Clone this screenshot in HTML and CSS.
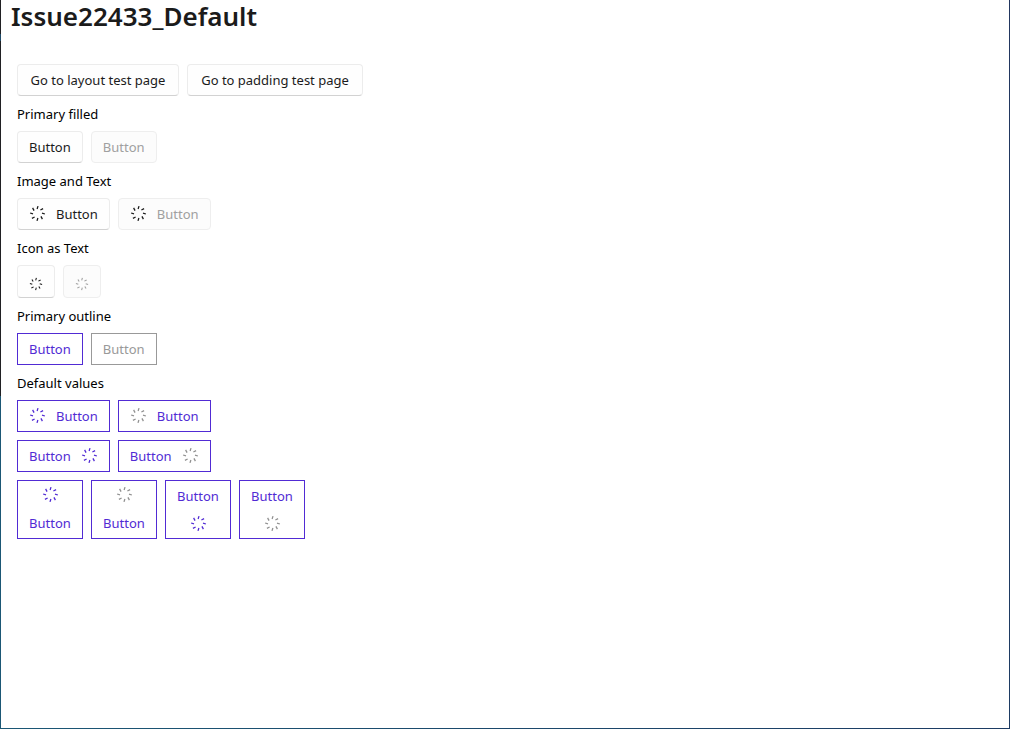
FILE: index.html
```html
<!DOCTYPE html>
<html lang="en">
<head>
<meta charset="utf-8">
<title>Issue22433_Default</title>
<link rel="stylesheet" href="styles.css">
</head>
<body>
<svg class="defs" aria-hidden="true">
  <symbol id="spinner" viewBox="0 0 17 17">
    <g stroke="currentColor" stroke-width="1.3">
      <path id="ray" d="M8.1 4L9 1.1"/>
      <use href="#ray" transform="rotate(45 8.5 8.5)"/>
      <use href="#ray" transform="rotate(90 8.5 8.5)"/>
      <use href="#ray" transform="rotate(135 8.5 8.5)"/>
      <use href="#ray" transform="rotate(180 8.5 8.5)"/>
      <use href="#ray" transform="rotate(225 8.5 8.5)"/>
      <use href="#ray" transform="rotate(270 8.5 8.5)"/>
      <use href="#ray" transform="rotate(315 8.5 8.5)"/>
    </g>
  </symbol>
</svg>
<div class="window">
  <header class="header"><h1 class="title">Issue22433_Default</h1></header>
  <main class="content">
    <div class="row">
      <button class="btn nav-layout" type="button">Go to layout test page</button>
      <button class="btn nav-padding" type="button">Go to padding test page</button>
    </div>
    <h2 class="label">Primary filled</h2>
    <div class="row">
      <button class="btn" type="button">Button</button>
      <button class="btn" type="button" disabled>Button</button>
    </div>
    <h2 class="label">Image and Text</h2>
    <div class="row">
      <button class="btn" type="button"><svg class="icon icon-dark"><use href="#spinner"/></svg>Button</button>
      <button class="btn" type="button" disabled><svg class="icon icon-dark"><use href="#spinner"/></svg>Button</button>
    </div>
    <h2 class="label">Icon as Text</h2>
    <div class="row">
      <button class="btn" type="button" aria-label="Spinner"><svg class="glyph"><use href="#spinner"/></svg></button>
      <button class="btn" type="button" aria-label="Spinner" disabled><svg class="glyph"><use href="#spinner"/></svg></button>
    </div>
    <h2 class="label">Primary outline</h2>
    <div class="row">
      <button class="btn outline" type="button">Button</button>
      <button class="btn outline" type="button" disabled>Button</button>
    </div>
    <h2 class="label">Default values</h2>
    <div class="row">
      <button class="btn outline" type="button"><svg class="icon"><use href="#spinner"/></svg>Button</button>
      <button class="btn outline" type="button"><svg class="icon icon-gray"><use href="#spinner"/></svg>Button</button>
    </div>
    <div class="row">
      <button class="btn outline" type="button">Button<svg class="icon"><use href="#spinner"/></svg></button>
      <button class="btn outline" type="button">Button<svg class="icon icon-gray"><use href="#spinner"/></svg></button>
    </div>
    <div class="row">
      <button class="btn outline stacked" type="button"><svg class="icon"><use href="#spinner"/></svg>Button</button>
      <button class="btn outline stacked" type="button"><svg class="icon icon-gray"><use href="#spinner"/></svg>Button</button>
      <button class="btn outline stacked" type="button">Button<svg class="icon"><use href="#spinner"/></svg></button>
      <button class="btn outline stacked" type="button">Button<svg class="icon icon-gray"><use href="#spinner"/></svg></button>
    </div>
  </main>
</div>
</body>
</html>
```

FILE: styles.css
```css
* { box-sizing: border-box; }

body {
  margin: 0;
  min-height: 100vh;
  display: flex;
  padding: 0 1px 1px;
  font: 13px/19px "Segoe UI", "Noto Sans", "Open Sans", sans-serif;
  color: #000;
  background:
    linear-gradient(#202023 0 34px, #1f4a68 34px 41px, #202023 41px 396px, #1b5775 396px) left / 1px 100% no-repeat,
    linear-gradient(#22365f, #1d3b63) right / 1px 100% no-repeat,
    linear-gradient(90deg, #1b5775, #1d3b63);
}

.defs { position: absolute; width: 0; height: 0; }

.window { flex: 1; background: #fff; }

.header { height: 64px; padding: 0 10px; }

.title {
  margin: 0;
  font-size: 26px;
  line-height: 32px;
  font-weight: 600;
  color: #1b1b1b;
}

.content {
  display: flex;
  flex-direction: column;
  gap: 8px;
  padding: 0 16px 16px;
}

.label { margin: 0 0 -1px; padding-top: 1px; font-size: inherit; font-weight: 400; }

.row { display: flex; flex-wrap: wrap; align-items: flex-start; gap: 8px; }

.btn {
  display: flex;
  align-items: flex-start;
  justify-content: center;
  gap: 10px;
  padding: 6px 11px 5px;
  border: 1px solid #ececec;
  border-bottom-color: #d2d2d2;
  border-radius: 4px;
  background: #fefefe;
  font: inherit;
  color: #1b1b1b;
}

.btn:disabled {
  border-color: #eee;
  background: #fcfcfc;
  color: #a0a0a0;
}

.nav-layout { min-width: 162px; }
.nav-padding { min-width: 176px; }

.outline,
.outline:disabled { border-color: currentColor; border-radius: 0; background: #fff; }
.outline { color: #512bd4; }
.outline:disabled { color: #999; }

.stacked { min-width: 66px; flex-direction: column; align-items: center; }

.icon { width: 17px; height: 17px; }
.stacked .icon { margin: -1px 0 1px; }
.icon-dark { color: #1b1b1b; }
.icon-gray { color: #919191; }

.glyph { width: 14px; height: 14px; margin: 5px 0 1px; }
```
